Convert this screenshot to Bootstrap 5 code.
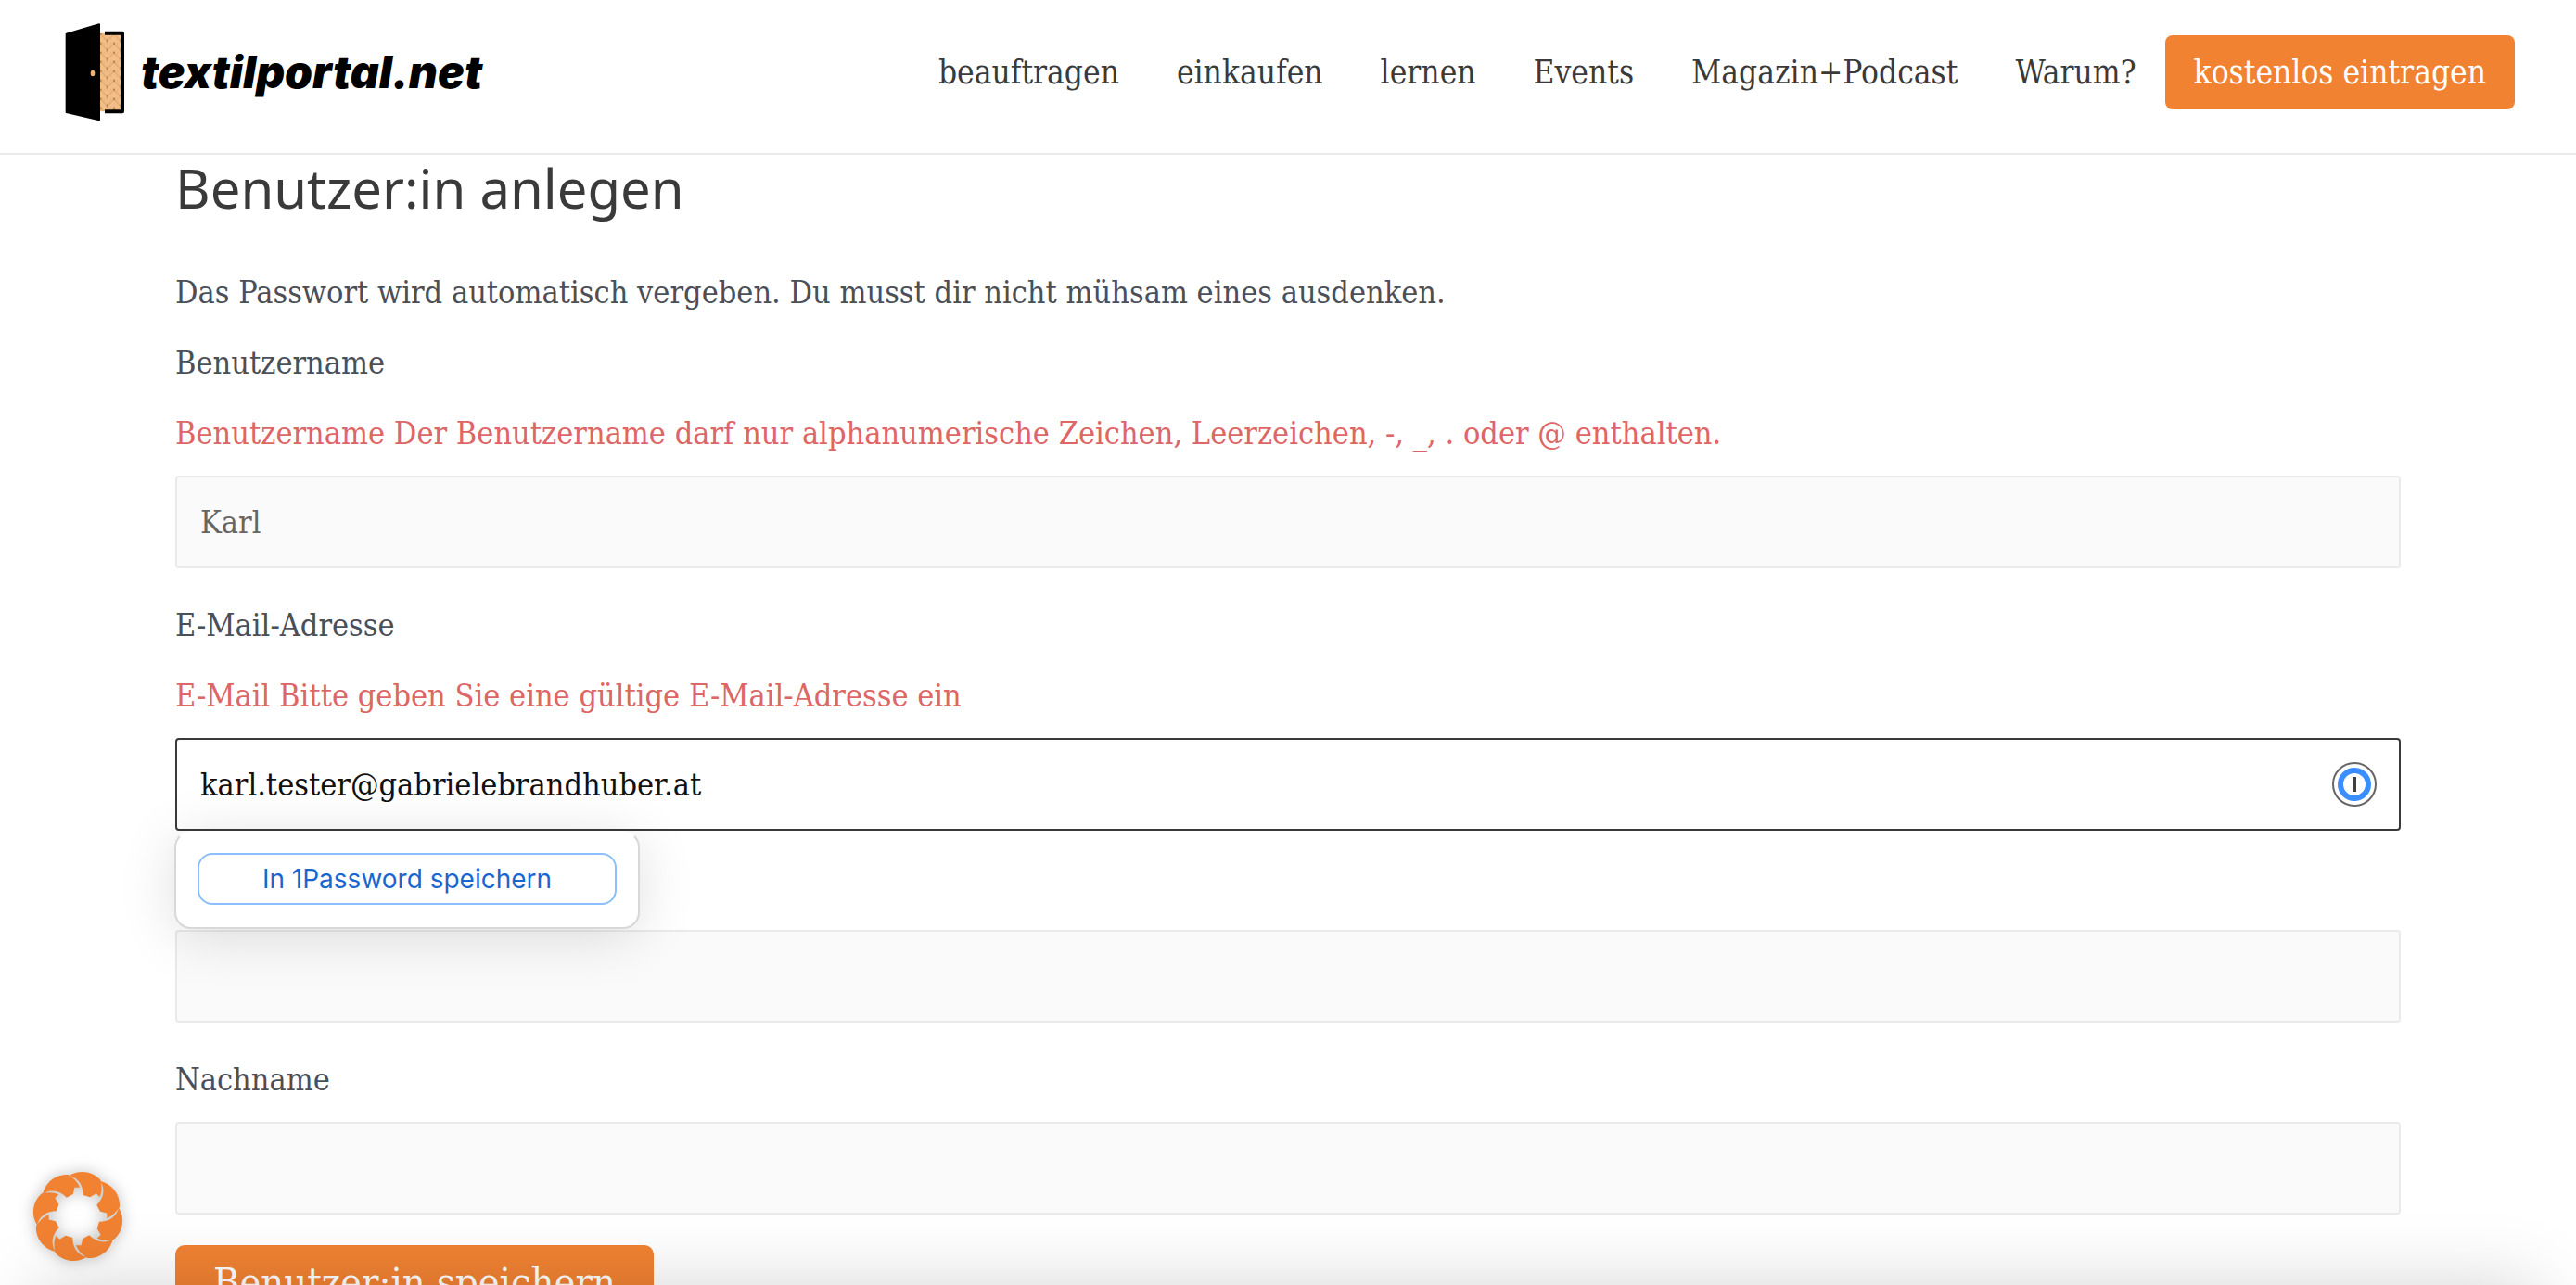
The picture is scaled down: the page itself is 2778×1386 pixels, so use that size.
<!DOCTYPE html>
<html lang="de">
<head>
<meta charset="utf-8">
<meta name="viewport" content="width=device-width, initial-scale=1">
<title>textilportal.net – Benutzer:in anlegen</title>
<link href="https://cdn.jsdelivr.net/npm/bootstrap@5.3.0/dist/css/bootstrap.min.css" rel="stylesheet">
<style>
  :root { --orange: #f18232; --ink: #3a3a3a; --copy: #4b4f58; --line: #eaeaea; }
  body { font-family: "DejaVu Serif Condensed", "DejaVu Serif", serif; font-size: 34px; line-height: 60px; color: var(--copy); overflow: hidden; height: 100vh; }
  .site-header { padding: 25px 66px 34px 70px; border-bottom: 2px solid var(--line); background: #fff; }
  .brand-link { gap: 18px; }
  .wordmark { font-family: Inter, sans-serif; font-weight: 900; font-style: italic; font-size: 48px; line-height: 60px; color: #000; }
  .brand-door { width: 64px; height: 106px; }
  .site-menu { font-size: 35px; }
  .site-menu .nav-link { color: var(--ink); padding: 0 31px; line-height: 80px; white-space: nowrap; }
  .btn-orange, .btn-orange:hover { background: var(--orange); color: #fff; border: 0; border-radius: 8px; font-size: inherit; line-height: 80px; padding: 0 31px; white-space: nowrap; }
  .btn-orange.btn-save { font-size: 43px; line-height: 80px; padding: 0 41px; border-radius: 10px; margin-top: 2px; }
  .page-col { max-width: 2400px; }
  .page-title { font-family: "Noto Sans", sans-serif; font-weight: 400; font-size: 58px; line-height: 72px; color: var(--ink); margin-bottom: 46px; }
  .form-row { margin-bottom: 31px; }
  .form-row label, .form-row p, .intro { display: block; margin-bottom: 16px; }
  .error-text { color: #dd6666; }
  .form-row .form-control { height: 100px; font-size: inherit; color: #666; background: #fafafa; border: 2px solid var(--line); border-radius: 4px; padding: 0 25px; box-shadow: none; }
  .form-row .form-control.is-active { background: #fff; border-color: var(--ink); color: #111; }
  .vault-mark { right: 26px; top: 26px; width: 48px; height: 48px; }
  .vault-menu { top: 100%; left: -1px; width: 502px; padding: 22px 23px 24px; background: #fff; border: 2px solid #d8d8d8; border-top-color: transparent; border-radius: 18px; box-shadow: 0 8px 60px rgba(0,0,0,.13); z-index: 5; }
  .vault-menu .btn { font-family: Inter, sans-serif; font-size: 28px; line-height: 52px; color: #1a66d0; border: 2px solid #8bbfff; border-radius: 16px; padding: 0; background: #fff; }
  .consent-btn { left: 30px; bottom: 20px; width: 108px; height: 108px; }
  .consent-btn svg { filter: drop-shadow(0 0 8px rgba(0,0,0,.25)); overflow: visible; }
  .window-shade { top: 100%; left: 40px; right: 40px; height: 200px; box-shadow: 0 0 80px rgba(0,0,0,.17); pointer-events: none; z-index: 1040; }
</style>
</head>
<body class="bg-white">
<header class="site-header d-flex justify-content-between align-items-center">
  <a href="#" class="brand-link d-flex align-items-center text-decoration-none">
    <svg class="brand-door" viewBox="90 76 192 318" aria-hidden="true">
      <defs>
        <pattern id="knit" x="206" y="108" width="43" height="30" patternUnits="userSpaceOnUse">
          <path fill="#f3bd87" d="M0 0h43v30H0z"/>
          <path d="M0 0C3 10 12 16 21 25C30 16 40 10 43 0M21 25v8M21 0v4" fill="none" stroke="#bd8853" stroke-width="2"/>
          <path d="M0 0v7M43 0v7M21 20v8" fill="none" stroke="#96632f" stroke-width="3"/>
          <path d="M9 0l4 9M34 0l-4 9" fill="none" stroke="#e3a870" stroke-width="2"/>
        </pattern>
      </defs>
      <path fill="url(#knit)" d="M203 108h70v254h-70z"/>
      <path d="M219 108h57v254h-57" fill="none" stroke="#000" stroke-width="12" stroke-linejoin="round"/>
      <path d="M95 111l106-31v309l-106-25z" stroke="#000" stroke-width="6" stroke-linejoin="round"/>
      <ellipse cx="180" cy="238" rx="7" ry="10" fill="#eeb075"/>
    </svg>
    <span class="wordmark">textilportal.net</span>
  </a>
  <nav class="site-menu d-flex align-items-center" aria-label="Hauptmenü">
    <a class="nav-link" href="#">beauftragen</a>
    <a class="nav-link" href="#">einkaufen</a>
    <a class="nav-link" href="#">lernen</a>
    <a class="nav-link" href="#">Events</a>
    <a class="nav-link" href="#">Magazin+Podcast</a>
    <a class="nav-link" href="#">Warum?</a>
    <a class="btn btn-orange" href="#">kostenlos eintragen</a>
  </nav>
</header>

<main class="page-col mx-auto">
  <h1 class="page-title">Benutzer:in anlegen</h1>
  <p class="intro">Das Passwort wird automatisch vergeben. Du musst dir nicht mühsam eines ausdenken.</p>
  <form>
    <div class="form-row">
      <label for="username">Benutzername</label>
      <p class="error-text">Benutzername Der Benutzername darf nur alphanumerische Zeichen, Leerzeichen, -, _, . oder @ enthalten.</p>
      <input class="form-control" id="username" type="text" value="Karl">
    </div>
    <div class="form-row">
      <label for="email">E-Mail-Adresse</label>
      <p class="error-text">E-Mail Bitte geben Sie eine gültige E-Mail-Adresse ein</p>
      <div class="position-relative">
        <input class="form-control is-active" id="email" type="email" value="karl.tester@gabrielebrandhuber.at">
        <svg class="vault-mark position-absolute" viewBox="0 0 48 48" aria-hidden="true">
          <circle cx="24" cy="24" r="23" fill="#fff" stroke="#666" stroke-width="2"/>
          <circle cx="24" cy="24" r="15" fill="#fff" stroke="#3b8eff" stroke-width="6"/>
          <path d="M22 16h4v16h-4z" fill="#404040"/>
        </svg>
        <div class="vault-menu position-absolute">
          <button type="button" class="btn d-block w-100">In 1Password speichern</button>
        </div>
      </div>
    </div>
    <div class="form-row">
      <label class="invisible" for="firstname">Vorname</label>
      <input class="form-control" id="firstname" type="text">
    </div>
    <div class="form-row">
      <label for="lastname">Nachname</label>
      <input class="form-control" id="lastname" type="text">
    </div>
    <button type="submit" class="btn btn-orange btn-save">Benutzer:in speichern</button>
  </form>
</main>

<button type="button" class="consent-btn btn p-0 border-0 position-fixed" aria-label="Cookie-Einstellungen">
  <svg class="d-block" width="108" height="108" viewBox="-162 -162 324 324">
    <defs><path id="petal" d="M-28-132C2-152 48-148 74-117Q81-86 71-62L59-74L40-62L17-69C17-101 3-123-28-132Z"/></defs>
    <g fill="#f18232">
      <use href="#petal"/><use href="#petal" transform="rotate(45)"/><use href="#petal" transform="rotate(90)"/><use href="#petal" transform="rotate(135)"/>
      <use href="#petal" transform="rotate(180)"/><use href="#petal" transform="rotate(225)"/><use href="#petal" transform="rotate(270)"/><use href="#petal" transform="rotate(315)"/>
    </g>
  </svg>
</button>
<div class="window-shade position-fixed"></div>
<script src="https://cdn.jsdelivr.net/npm/bootstrap@5.3.0/dist/js/bootstrap.bundle.min.js"></script>
</body>
</html>
